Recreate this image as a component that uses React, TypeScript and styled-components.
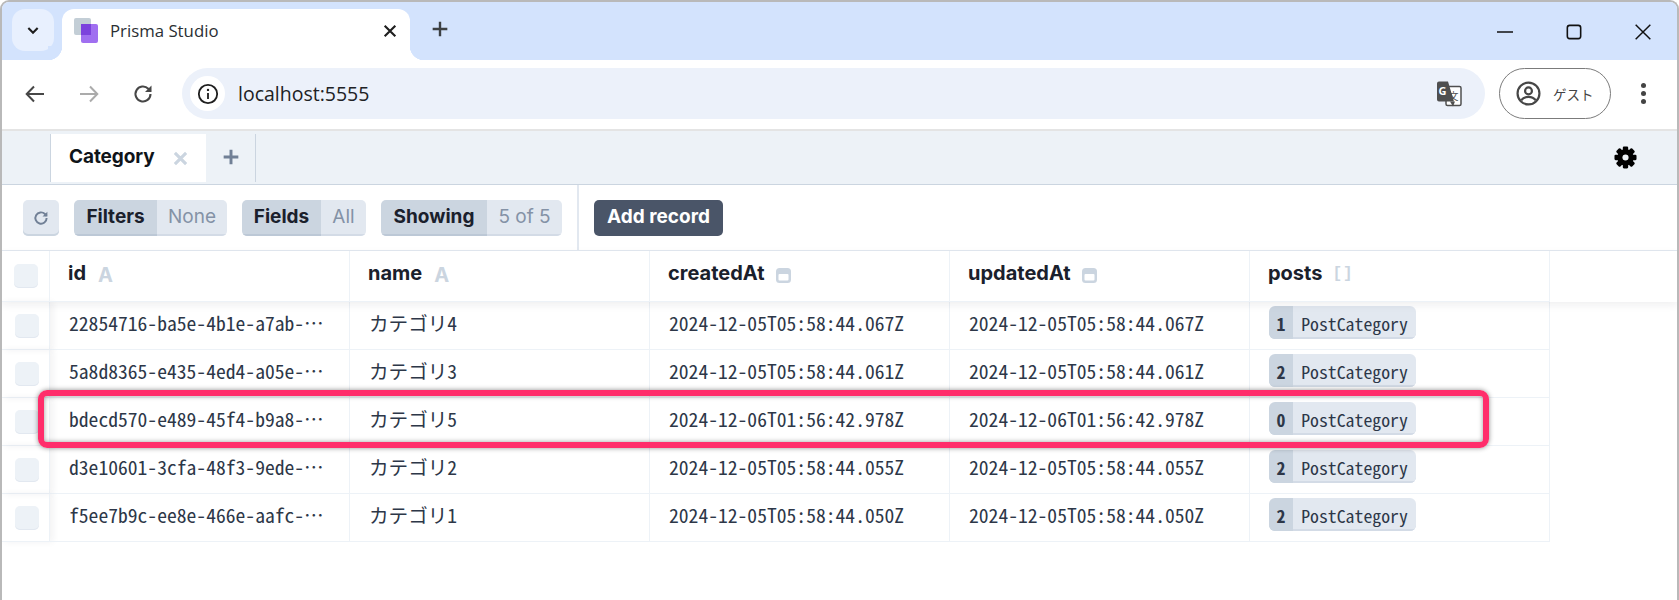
import React from "react";
import styled, { createGlobalStyle } from "styled-components";

const Global = createGlobalStyle`
  html, body { margin: 0; padding: 0; background: #fff; }
  body { font-family: "Inter", "Noto Sans CJK JP", sans-serif; }
  * { box-sizing: border-box; }
`;

const MONO = `"Noto Sans Mono CJK JP", "Noto Sans CJK JP", "Liberation Mono", monospace`;

const Win = styled.div`
  position: relative;
  width: 1679px;
  height: 600px;
  border: 2px solid #b9b9b9;
  border-bottom: none;
  border-radius: 9px 9px 0 0;
  display: flex;
  flex-direction: column;
  overflow: hidden;
  background: #fff;
`;

const Strip = styled.div`
  height: 58px;
  background: #d3e3fd;
  display: flex;
  align-items: flex-start;
  padding-top: 7px;
  padding-left: 10px;
  flex: none;
`;
const TabSearch = styled.div`
  width: 42px;
  height: 42px;
  border-radius: 13px;
  background: #e8f0fe;
  display: flex;
  align-items: center;
  justify-content: center;
  margin-right: 8px;
`;
const BrowserTab = styled.div`
  position: relative;
  width: 348px;
  height: 51px;
  background: #fff;
  border-radius: 12px 12px 0 0;
  display: flex;
  align-items: center;
  padding: 0 12px 8px 12px;
  &::before, &::after {
    content: "";
    position: absolute;
    bottom: 0;
    width: 14px;
    height: 14px;
  }
  &::before { left: -14px; background: radial-gradient(circle at 0 0, #d3e3fd 14px, #fff 14.5px); }
  &::after { right: -14px; background: radial-gradient(circle at 100% 0, #d3e3fd 14px, #fff 14.5px); }
`;
const TabTitle = styled.span`
  font-family: "Open Sans", sans-serif;
  font-size: 16.8px;
  color: #2b2f33;
  margin-left: 12px;
  flex: 1;
`;
const NewTab = styled.div`
  margin-left: 18px;
  width: 24px;
  height: 24px;
  margin-top: 8px;
  display: flex;
  align-items: center;
  justify-content: center;
`;
const Spacer = styled.div`
  flex: 1;
`;
const WinControls = styled.div`
  display: flex;
  align-items: center;
  gap: 53px;
  margin-right: 26px;
  margin-top: 15px;
`;
const Toolbar = styled.div`
  position: relative;
  height: 71px;
  flex: none;
  background: #fff;
  border-bottom: 2px solid #e4e4e4;
  border-radius: 12px 12px 0 0;
  display: flex;
  align-items: center;
  padding: 0 0 2px 21px;
`;
const NavIcons = styled.div`
  display: flex;
  align-items: center;
  gap: 30px;
  width: 159px;
`;
const Pill = styled.div`
  width: 1303px;
  height: 51px;
  border-radius: 26px;
  background: #ecf1fa;
  display: flex;
  align-items: center;
  padding: 0 23px 0 8px;
`;
const InfoWrap = styled.div`
  width: 35px;
  height: 35px;
  border-radius: 50%;
  background: #fff;
  display: flex;
  align-items: center;
  justify-content: center;
  margin-right: 13px;
`;
const Url = styled.span`
  font-family: "Open Sans", sans-serif;
  font-size: 19.5px;
  color: #202124;
  flex: 1;
`;
const Profile = styled.div`
  margin-left: 14px;
  width: 112px;
  height: 51px;
  border: 1.5px solid #7b7b7b;
  border-radius: 26px;
  display: flex;
  align-items: center;
  padding-left: 16px;
  gap: 12px;
`;
const ProfileName = styled.span`
  font-family: "Noto Sans CJK JP", sans-serif;
  font-size: 13.5px;
  color: #444;
`;
const Dots = styled.div`
  margin-left: 30px;
  display: flex;
  flex-direction: column;
  gap: 3px;
`;
const Dot = styled.i`
  display: block;
  width: 5px;
  height: 5px;
  border-radius: 50%;
  background: #444;
`;

const AppTabs = styled.div`
  height: 54px;
  flex: none;
  background: #edf2f7;
  border-bottom: 1px solid #cbd5e0;
  display: flex;
  align-items: flex-start;
  padding: 3px 0 0 48px;
  position: relative;
`;
const AppTab = styled.div`
  width: 156px;
  height: 48px;
  background: #fff;
  border-left: 1px solid #cbd5e0;
  display: flex;
  align-items: center;
  padding: 0 0 4px 18px;
`;
const AppTabName = styled.span`
  font-size: 19px;
  font-weight: 700;
  color: #0f1419;
  letter-spacing: -0.1px;
  flex: 1;
`;
const AppTabClose = styled.span`
  display: flex;
  margin: 4px 18px 0 0;
`;
const AppPlus = styled.div`
  width: 50px;
  height: 48px;
  border-right: 1px solid #cbd5e0;
  padding-bottom: 2px;
  display: flex;
  align-items: center;
  justify-content: center;
`;
const Gear = styled.div`
  display: flex;
  margin-left: auto;
  margin-right: 40px;
  margin-top: 12px;
`;

const Actions = styled.div`
  height: 66px;
  flex: none;
  border-bottom: 1px solid #e2e8f0;
  display: flex;
  align-items: center;
  padding-left: 21px;
`;
const RefreshBtn = styled.div`
  width: 36px;
  height: 36px;
  background: #e2e8f0;
  border-radius: 5px;
  box-shadow: inset 0 -2px 0 #cbd5e0;
  display: flex;
  align-items: center;
  justify-content: center;
  margin-right: 15px;
`;
const Group = styled.div<{ $gap?: number }>`
  display: flex;
  height: 36px;
  border-radius: 5px;
  overflow: hidden;
  margin-right: ${(p) => p.$gap ?? 15}px;
  font-size: 19px;
`;
const GroupLabel = styled.span<{ $w: number }>`
  width: ${(p) => p.$w}px;
  background: #cbd5e0;
  font-weight: 700;
  color: #1a202c;
  display: flex;
  align-items: center;
  justify-content: center;
  padding-bottom: 3px;
  box-shadow: inset 0 -2px 0 #bcc8d6;
`;
const GroupValue = styled.span<{ $w: number }>`
  width: ${(p) => p.$w}px;
  background: #e2e8f0;
  color: #8492a6;
  font-weight: 400;
  display: flex;
  align-items: center;
  justify-content: center;
  padding-bottom: 3px;
  box-shadow: inset 0 -2px 0 #d3dbe6;
`;
const VDivider = styled.div`
  width: 2px;
  height: 65px;
  background: #e2e8f0;
  margin-left: 1px;
  margin-right: 15px;
`;
const AddBtn = styled.div`
  width: 129px;
  height: 36px;
  background: #4a5568;
  color: #fff;
  font-weight: 700;
  font-size: 19px;
  border-radius: 5px;
  padding-bottom: 3px;
  display: flex;
  align-items: center;
  justify-content: center;
`;

const Row = styled.div<{ $header?: boolean }>`
  display: flex;
  height: ${(p) => (p.$header ? 51 : 48)}px;
  flex: none;
  position: relative;
  ${(p) => (p.$header ? "box-shadow: 0 3px 8px rgba(26,32,44,0.07); z-index: 1;" : "")}
`;
const CheckCell = styled.div<{ $header?: boolean }>`
  width: 48px;
  flex: none;
  display: flex;
  align-items: center;
  justify-content: flex-start;
  padding-left: ${(p) => (p.$header ? 12 : 13)}px;
  border-right: 1px solid #edf2f7;
  border-bottom: 1px solid #edf2f7;
  ${(p) => (p.$header ? "" : "box-shadow: 3px 0 7px rgba(26,32,44,0.06);")}
`;
const Check = styled.div`
  width: 24px;
  height: 24px;
  background: #edf2f7;
  border-radius: 5px;
  box-shadow: inset 0 -1px 0 #e2e8f0;
`;
const Cell = styled.div<{ $w?: number }>`
  width: ${(p) => p.$w ?? 300}px;
  flex: none;
  border-right: 1px solid #edf2f7;
  border-bottom: 1px solid #edf2f7;
  display: flex;
  align-items: center;
  padding: 0 0 6px 19px;
  white-space: nowrap;
  overflow: hidden;
`;
const HeadName = styled.span`
  margin-left: -1px;
  font-size: 20px;
  font-weight: 700;
  color: #1a202c;
`;
const TypeA = styled.span`
  margin-left: 12px;
  margin-top: 3px;
  font-size: 20px;
  font-weight: 700;
  color: #cbd5e0;
`;
const TypeList = styled.span`
  margin-left: 10px;
  margin-top: 2px;
  font-family: "Liberation Mono", monospace;
  font-size: 16px;
  font-weight: 700;
  color: #cbd5e0;
  letter-spacing: 1px;
`;
const TypeDate = styled.span`
  margin: 4px 0 0 11px;
  display: flex;
`;
const Mono = styled.span`
  font-family: ${MONO};
  font-size: 19.6px;
  color: #2d3748;
`;
const Chip = styled.div`
  display: flex;
  height: 33px;
  border-radius: 6px;
  overflow: hidden;
  font-family: ${MONO};
  font-size: 17.8px;
  color: #2d3748;
  box-shadow: inset 0 -2px 0 #cbd5e0;
`;
const ChipCount = styled.span`
  width: 24px;
  background: #cbd5e0;
  font-weight: 700;
  display: flex;
  align-items: center;
  justify-content: center;
`;
const ChipLabel = styled.span`
  width: 123px;
  background: #e2e8f0;
  display: flex;
  align-items: center;
  justify-content: center;
  box-shadow: inset 0 -2px 0 #d3dbe6;
`;
const Highlight = styled.div`
  position: absolute;
  left: 36px;
  top: 388px;
  width: 1451px;
  height: 58px;
  border: 6px solid #ff2d6b;
  border-radius: 9px;
  box-shadow: 0 0 5px rgba(0, 0, 0, 0.45), inset 0 0 5px rgba(0, 0, 0, 0.4);
  pointer-events: none;
  z-index: 3;
`;

const Ico = ({ size = 24, children }: { size?: number; children: React.ReactNode }) => (
  <svg width={size} height={size} viewBox="0 0 24 24" fill="none">{children}</svg>
);

const Favicon = () => (
  <svg width="24" height="26" viewBox="0 0 24 26">
    <rect x="0" y="0" width="17" height="17" rx="2" fill="#c3ced6" />
    <rect x="7" y="6" width="17" height="19" rx="2" fill="#a06ff0" />
    <rect x="7" y="6" width="10" height="11" fill="#7c42dd" />
  </svg>
);

const Translate = () => (
  <svg width="26" height="26" viewBox="0 0 26 26">
    <rect x="10" y="5.5" width="15" height="19" rx="1.5" fill="#fff" stroke="#4f4f4f" strokeWidth="1.5" />
    <path d="M1 2.5a2 2 0 0 1 2-2h9l6 20H3a2 2 0 0 1-2-2z" fill="#4f4f4f" />
    <text x="2.5" y="14" fontFamily="Open Sans" fontWeight="700" fontSize="11" fill="#fff">G</text>
    <text x="12.5" y="19" fontFamily="Noto Sans CJK JP" fontSize="10" fill="#4f4f4f">文</text>
    <path d="M14 20.5l3 5 2-5z" fill="#4f4f4f" />
  </svg>
);

const DateIcon = () => (
  <svg width="15" height="15" viewBox="0 0 15 15">
    <rect x="0" y="0" width="15" height="15" rx="3.5" fill="#cbd5e0" />
    <rect x="2.5" y="6" width="10" height="6.5" rx="1" fill="#fff" />
  </svg>
);

const Refresh = ({ c, s, w }: { c: string; s: number; w: number }) => (
  <Ico size={s}>
    <path d="M19.5 12a7.5 7.5 0 1 1-2.2-5.3L19.5 9" stroke={c} strokeWidth={w} />
    <path d="M20.5 3.5V10h-6.5z" fill={c} />
  </Ico>
);

const teeth = [0, 45, 90, 135];
const GearIcon = () => (
  <svg width="23" height="23" viewBox="0 0 24 24">
    <circle cx="12" cy="12" r="8.5" fill="#000" />
    {teeth.map((a) => (
      <rect key={a} x="9.2" y="0.5" width="5.6" height="23" rx="1.2" fill="#000" transform={`rotate(${a} 12 12)`} />
    ))}
    <circle cx="12" cy="12" r="3.2" fill="#edf2f7" />
  </svg>
);

const rows = [
  ["22854716-ba5e-4b1e-a7ab-…", "カテゴリ4", "2024-12-05T05:58:44.067Z", "1"],
  ["5a8d8365-e435-4ed4-a05e-…", "カテゴリ3", "2024-12-05T05:58:44.061Z", "2"],
  ["bdecd570-e489-45f4-b9a8-…", "カテゴリ5", "2024-12-06T01:56:42.978Z", "0"],
  ["d3e10601-3cfa-48f3-9ede-…", "カテゴリ2", "2024-12-05T05:58:44.055Z", "2"],
  ["f5ee7b9c-ee8e-466e-aafc-…", "カテゴリ1", "2024-12-05T05:58:44.050Z", "2"],
];

export default function App() {
  return (
    <div lang="ja">
      <Global />
      <Win>
        <Strip>
          <TabSearch>
            <Ico size={16}><path d="M5 9l7 7 7-7" stroke="#1f1f1f" strokeWidth="3.2" /></Ico>
          </TabSearch>
          <BrowserTab>
            <Favicon />
            <TabTitle>Prisma Studio</TabTitle>
            <Ico size={16}><path d="M4 4l16 16M20 4L4 20" stroke="#1f1f1f" strokeWidth="3.2" /></Ico>
          </BrowserTab>
          <NewTab>
            <Ico size={16}><path d="M12 1v22M1 12h22" stroke="#3c4043" strokeWidth="3.6" /></Ico>
          </NewTab>
          <Spacer />
          <WinControls>
            <Ico size={16}><path d="M0 12h24" stroke="#111" strokeWidth="2.6" /></Ico>
            <Ico size={16}><rect x="2" y="2" width="20" height="20" rx="3.5" stroke="#111" strokeWidth="2.4" /></Ico>
            <Ico size={16}><path d="M1 1l22 22M23 1L1 23" stroke="#111" strokeWidth="2.2" /></Ico>
          </WinControls>
        </Strip>
        <Toolbar>
          <NavIcons>
            <Ico><path d="M21 12H4M11 4.5L3.7 12l7.3 7.5" stroke="#474747" strokeWidth="2" /></Ico>
            <Ico><path d="M3 12h17M13 4.5l7.3 7.5-7.3 7.5" stroke="#ababab" strokeWidth="2" /></Ico>
            <Refresh c="#474747" s={24} w={2.1} />
          </NavIcons>
          <Pill>
            <InfoWrap>
              <Ico size={22}>
                <circle cx="12" cy="12" r="10" stroke="#1f1f1f" strokeWidth="2" />
                <path d="M12 11v6.5" stroke="#1f1f1f" strokeWidth="2" />
                <circle cx="12" cy="7.5" r="1.3" fill="#1f1f1f" />
              </Ico>
            </InfoWrap>
            <Url>localhost:5555</Url>
            <Translate />
          </Pill>
          <Profile>
            <Ico size={25}>
              <circle cx="12" cy="12" r="10.5" stroke="#474747" strokeWidth="2.1" />
              <circle cx="12" cy="9.5" r="3.3" stroke="#474747" strokeWidth="2.1" />
              <path d="M5 18.5c2-2.6 4.5-3.3 7-3.3s5 .7 7 3.3" stroke="#474747" strokeWidth="2.1" />
            </Ico>
            <ProfileName>ゲスト</ProfileName>
          </Profile>
          <Dots><Dot /><Dot /><Dot /></Dots>
        </Toolbar>
        <AppTabs>
          <AppTab>
            <AppTabName>Category</AppTabName>
            <AppTabClose>
              <Ico size={15}><path d="M3 3l18 18M21 3L3 21" stroke="#cbd5e0" strokeWidth="5" /></Ico>
            </AppTabClose>
          </AppTab>
          <AppPlus>
            <Ico size={16}><path d="M12 1v22M1 12h22" stroke="#718096" strokeWidth="4.4" /></Ico>
          </AppPlus>
          <Gear><GearIcon /></Gear>
        </AppTabs>
        <Actions>
          <RefreshBtn><Refresh c="#718096" s={18} w={2.6} /></RefreshBtn>
          <Group>
            <GroupLabel $w={83}>Filters</GroupLabel>
            <GroupValue $w={70}>None</GroupValue>
          </Group>
          <Group>
            <GroupLabel $w={79}>Fields</GroupLabel>
            <GroupValue $w={45}>All</GroupValue>
          </Group>
          <Group $gap={14}>
            <GroupLabel $w={106}>Showing</GroupLabel>
            <GroupValue $w={75}>5 of 5</GroupValue>
          </Group>
          <VDivider />
          <AddBtn>Add record</AddBtn>
        </Actions>
        <Row $header>
          <CheckCell $header><Check /></CheckCell>
          <Cell><HeadName>id</HeadName><TypeA>A</TypeA></Cell>
          <Cell><HeadName>name</HeadName><TypeA>A</TypeA></Cell>
          <Cell><HeadName>createdAt</HeadName><TypeDate><DateIcon /></TypeDate></Cell>
          <Cell><HeadName>updatedAt</HeadName><TypeDate><DateIcon /></TypeDate></Cell>
          <Cell><HeadName>posts</HeadName><TypeList>[]</TypeList></Cell>
        </Row>
        {rows.map((r) => (
          <Row key={r[0]}>
            <CheckCell><Check /></CheckCell>
            <Cell><Mono>{r[0]}</Mono></Cell>
            <Cell><Mono>{r[1]}</Mono></Cell>
            <Cell><Mono>{r[2]}</Mono></Cell>
            <Cell><Mono>{r[2]}</Mono></Cell>
            <Cell>
              <Chip>
                <ChipCount>{r[3]}</ChipCount>
                <ChipLabel>PostCategory</ChipLabel>
              </Chip>
            </Cell>
          </Row>
        ))}
        <Highlight />
      </Win>
    </div>
  );
}
